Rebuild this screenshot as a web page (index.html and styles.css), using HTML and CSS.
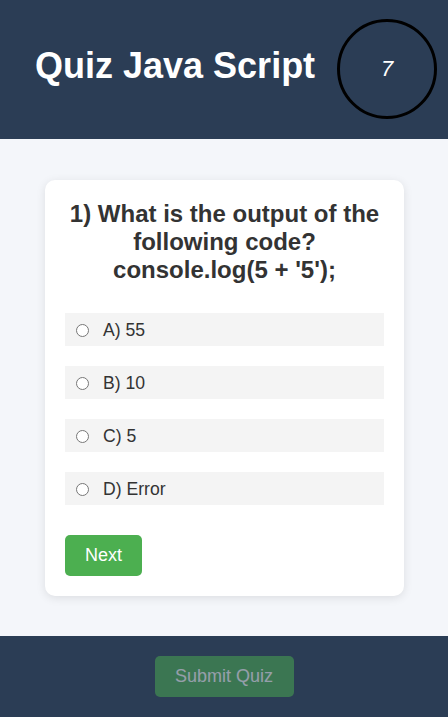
FILE: index.html
```html
<!DOCTYPE html>
<html>
<head>
<meta charset="utf-8">
<link rel="stylesheet" href="styles.css">
</head>
<body>
<header class="header">
  <h1 class="title">Quiz Java Script</h1>
  <div class="timer">7</div>
</header>
<main class="main">
  <section class="card">
    <h2 class="question">1) What is the output of the following code?<br>console.log(5 + '5');</h2>
    <div class="options">
      <label class="option"><input type="radio" name="q"> <span>A) 55</span></label>
      <label class="option"><input type="radio" name="q"> <span>B) 10</span></label>
      <label class="option"><input type="radio" name="q"> <span>C) 5</span></label>
      <label class="option"><input type="radio" name="q"> <span>D) Error</span></label>
    </div>
    <button class="btn next">Next</button>
  </section>
</main>
<footer class="footer">
  <button class="btn submit" disabled>Submit Quiz</button>
</footer>
</body>
</html>
```

FILE: styles.css
```css
* { box-sizing: border-box; }
html, body { margin: 0; padding: 0; }
body {
  font-family: "Liberation Sans", Arial, sans-serif;
  background: #f4f6fa;
  color: #333;
}
.header {
  background: #2b3d55;
  height: 139px;
  display: flex;
  align-items: center;
  padding: 0 10px 2px 35px;
  gap: 22px;
}
.title {
  margin: 0 0 6px;
  color: #fff;
  font-size: 36px;
  font-weight: bold;
  white-space: nowrap;
}
.timer {
  width: 100px;
  height: 100px;
  border: 3px solid #000;
  border-radius: 50%;
  display: flex;
  align-items: center;
  justify-content: center;
  color: #fff;
  font-style: italic;
  font-size: 22px;
  flex: none;
}
.main {
  padding: 41px 44px 40px 45px;
}
.card {
  background: #fff;
  border-radius: 10px;
  box-shadow: 0 2px 10px rgba(0,0,0,0.1);
  padding: 20px 20px 20px 20px;
}
.question {
  margin: 0 0 29px;
  font-size: 24px;
  line-height: 28px;
  text-align: center;
  font-weight: bold;
  color: #333;
}
.options {
  display: flex;
  flex-direction: column;
  gap: 20px;
  margin-bottom: 30px;
}
.option {
  display: flex;
  align-items: center;
  height: 33px;
  background: #f4f4f4;
  padding-left: 10px;
  padding-top: 1px;
  font-size: 17.6px;
  color: #333;
}
.option input {
  margin: 0 14px 0 1px;
  width: 13px;
  height: 13px;
}
.btn {
  font-family: "Liberation Sans", Arial, sans-serif;
  font-size: 18px;
  border: none;
  border-radius: 5px;
  color: #fff;
  background: #4caf50;
  height: 41px;
}
.next {
  width: 77px;
}
.footer {
  background: #2b3d55;
  height: 81px;
  display: flex;
  justify-content: center;
  padding-top: 20px;
}
.submit {
  width: 139px;
  opacity: 0.5;
}
```
